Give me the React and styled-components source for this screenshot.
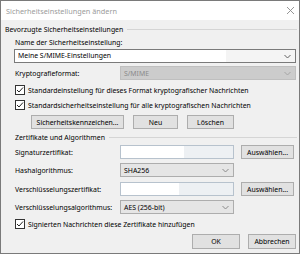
import React from 'react';
import styled, { createGlobalStyle } from 'styled-components';

const GlobalStyle = createGlobalStyle`
  * {
    margin: 0;
    padding: 0;
    box-sizing: border-box;
  }
  body {
    background: #ffffff;
    font-family: "Noto Sans", "Open Sans", sans-serif;
    font-size: 6.9px;
    color: #000000;
  }
`;

const Window = styled.div`
  width: 300px;
  height: 254px;
  border: 1px solid #7a7a7a;
  background: #f0f0f0;
  display: flex;
  flex-direction: column;
  overflow: hidden;
`;

const TitleBar = styled.div`
  height: 19px;
  background: #ffffff;
  display: flex;
  align-items: center;
  justify-content: space-between;
  padding: 0 5px 0 5px;
  color: #9b9b9b;
  font-size: 7.3px;
`;

const Body = styled.div`
  display: flex;
  flex-direction: column;
  padding: 0 2px 0 4px;
`;

const Row = styled.div`
  display: flex;
  align-items: center;
  height: ${(p) => p.$h || 14}px;
  margin-top: ${(p) => p.$mt || 0}px;
  padding-left: ${(p) => p.$indent || 0}px;
  padding-right: ${(p) => p.$pr || 0}px;
  justify-content: ${(p) => (p.$end ? 'flex-end' : 'flex-start')};
  gap: ${(p) => p.$gap || 0}px;
`;

const GroupHeader = styled(Row)`
  white-space: nowrap;
  &::after {
    content: '';
    flex: 1;
    height: 1px;
    margin-left: 4px;
    background: #d5d5d5;
  }
`;

const Label = styled.span`
  width: ${(p) => p.$w || 'auto'};
  white-space: nowrap;
  flex-shrink: 0;
`;

const Field = styled.div`
  width: ${(p) => p.$w}px;
  height: 14px;
  display: flex;
  align-items: center;
  border: 1px solid ${(p) => p.$border || '#a8a8a8'};
  background: ${(p) => p.$bg || '#ffffff'};
  color: ${(p) => p.$color || '#000000'};
  padding-left: 3px;
  padding-right: 4px;
  white-space: nowrap;
  overflow: hidden;
`;

const FieldText = styled.span`
  flex: 1;
`;

const Selected = styled.span`
  display: block;
  width: ${(p) => p.$w}px;
  margin-left: -3px;
  padding-left: 3px;
  line-height: 12px;
  background: #ffffff;
`;

const Blank = styled.div`
  height: 100%;
  background: #ffffff;
  width: ${(p) => p.$w}px;
`;

const Split = styled.div`
  width: ${(p) => p.$w}px;
  height: 14px;
  display: flex;
  border: 1px solid #b7c2cd;
  background: #edf0f3;
  flex-shrink: 0;
`;

const Chevron = styled.svg`
  width: 7px;
  height: 5px;
  flex-shrink: 0;
`;

const Button = styled.div`
  width: ${(p) => p.$w}px;
  height: ${(p) => p.$h || 14}px;
  margin-left: ${(p) => p.$ml || 0}px;
  border: 1px solid #adadad;
  background: #e1e1e1;
  display: flex;
  align-items: center;
  justify-content: center;
  white-space: nowrap;
  flex-shrink: 0;
`;

const CheckRow = styled(Row)`
  padding-left: 10px;
  gap: 3px;
`;

const Box = styled.div`
  width: 10px;
  height: 10px;
  border: 1px solid #333333;
  background: #ffffff;
  display: flex;
  align-items: center;
  justify-content: center;
  flex-shrink: 0;
`;

const Check = () => (
  <Box>
    <svg width="8" height="8" viewBox="0 0 8 8">
      <path d="M1 4 L3 6 L7 1.5" fill="none" stroke="#222" strokeWidth="1" />
    </svg>
  </Box>
);

const Down = ({ color = '#606060' }) => (
  <Chevron viewBox="0 0 7 5">
    <path d="M0.5 1 L3.5 4 L6.5 1" fill="none" stroke={color} strokeWidth="1" />
  </Chevron>
);

const Combo = ({ w, text, bg, border, color, chevron }) => (
  <Field $w={w} $bg={bg} $border={border} $color={color}>
    <FieldText>{text}</FieldText>
    <Down color={chevron} />
  </Field>
);

export default function App() {
  return (
    <>
      <GlobalStyle />
      <Window>
        <TitleBar>
          <span>Sicherheitseinstellungen ändern</span>
          <svg width="7" height="7" viewBox="0 0 7 7">
            <path d="M0 0 L7 7 M7 0 L0 7" stroke="#8a8a8a" strokeWidth="0.9" />
          </svg>
        </TitleBar>
        <Body>
          <GroupHeader $h={10} $mt={4}>Bevorzugte Sicherheitseinstellungen</GroupHeader>
          <Row $h={10} $mt={3} $indent={10}>
            <Label>Name der Sicherheitseinstellung:</Label>
          </Row>
          <Row $mt={2} $indent={9}>
            <Field $w={282} $bg="#f4f4f4" $border="#7a7a7a">
              <FieldText>
                <Selected $w={211}>Meine S/MIME-Einstellungen</Selected>
              </FieldText>
              <Down />
            </Field>
          </Row>
          <Row $mt={3} $indent={10}>
            <Label $w="105px">Kryptografieformat:</Label>
            <Combo w={176} text="S/MIME" bg="#cccccc" border="#bfbfbf" color="#8a8a8a" chevron="#a5a5a5" />
          </Row>
          <CheckRow $h={10} $mt={5}>
            <Check />
            <Label>Standardeinstellung für dieses Format kryptografischer Nachrichten</Label>
          </CheckRow>
          <CheckRow $h={10} $mt={5}>
            <Check />
            <Label>Standardsicherheitseinstellung für alle kryptografischen Nachrichten</Label>
          </CheckRow>
          <Row $mt={5} $indent={26} $gap={9}>
            <Button $w={93}>Sicherheitskennzeichen...</Button>
            <Button $w={45}>Neu</Button>
            <Button $w={47}>Löschen</Button>
          </Row>
          <GroupHeader $h={10} $mt={3} $indent={10}>Zertifikate und Algorithmen</GroupHeader>
          <Row $mt={3} $indent={10}>
            <Label $w="105px">Signaturzertifikat:</Label>
            <Split $w={114}>
              <Blank $w={63} />
            </Split>
            <Button $w={53} $ml={7}>Auswählen...</Button>
          </Row>
          <Row $mt={4} $indent={10}>
            <Label $w="105px">Hashalgorithmus:</Label>
            <Combo w={114} text="SHA256" bg="#e5e5e5" border="#adadad" chevron="#8a8a8a" />
          </Row>
          <Row $mt={5} $indent={10}>
            <Label $w="105px">Verschlüsselungszertifikat:</Label>
            <Split $w={114}>
              <Blank $w={58} />
            </Split>
            <Button $w={53} $ml={7}>Auswählen...</Button>
          </Row>
          <Row $mt={4} $indent={10}>
            <Label $w="105px">Verschlüsselungsalgorithmus:</Label>
            <Combo w={114} text="AES (256-bit)" bg="#e5e5e5" border="#adadad" chevron="#8a8a8a" />
          </Row>
          <CheckRow $h={10} $mt={5}>
            <Check />
            <Label>Signierten Nachrichten diese Zertifikate hinzufügen</Label>
          </CheckRow>
          <Row $h={15} $mt={5} $end $gap={8} $pr={1}>
            <Button $w={48} $h={15}>OK</Button>
            <Button $w={48} $h={15}>Abbrechen</Button>
          </Row>
        </Body>
      </Window>
    </>
  );
}
